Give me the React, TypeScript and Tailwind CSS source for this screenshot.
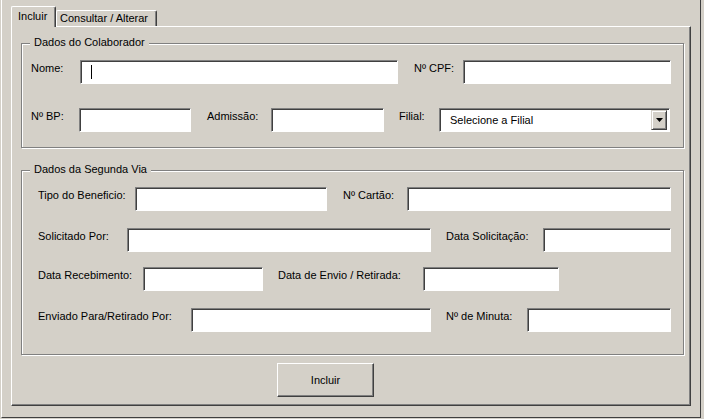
import React from 'react';

const sunken =
  'h-[24px] shrink-0 bg-white border border-t-[#808080] border-l-[#808080] border-b-white border-r-white shadow-[inset_1px_1px_0_#404040]';

function Label({ className, children }: { className: string; children: React.ReactNode }) {
  return <span className={`shrink-0 pt-[2px] leading-[13px] whitespace-nowrap ${className}`}>{children}</span>;
}

function Group({ title, className, children }: { title: string; className: string; children: React.ReactNode }) {
  return (
    <div className={`relative border border-[#808080] shadow-[inset_1px_1px_0_#fff,1px_1px_0_#fff] ${className}`}>
      <span className="absolute left-[8px] -top-[8px] bg-[#d4d0c8] px-[4px] leading-[13px]">{title}</span>
      {children}
    </div>
  );
}

export default function App() {
  return (
    <div className="w-[704px] h-[419px] bg-[#d4d0c8] pl-[1px] text-[11px] text-black font-['Liberation_Sans',Arial,sans-serif]">
      <div className="w-[700px] h-[418px] border-l border-white border-r border-r-[#404040] border-b border-b-[#404040] pt-[6px] pl-[9px]">
        {/* abas */}
        <div className="flex items-end h-[20px]">
          <div className="relative z-10 -mb-[1px] h-[21px] w-[45px] bg-[#d4d0c8] border-l border-t border-white border-r border-r-[#404040] rounded-tl-[2px] rounded-tr-[2px] shadow-[inset_-1px_0_0_#808080] pl-[6px] pt-[3px] leading-[13px]">
            Incluir
          </div>
          <div className="h-[16px] w-[101px] bg-[#d4d0c8] border-l border-t border-white border-r border-r-[#404040] rounded-tl-[2px] rounded-tr-[2px] shadow-[inset_-1px_0_0_#808080] pl-[3px] pt-[1px] leading-[13px]">
            Consultar / Alterar
          </div>
        </div>

        {/* painel da aba */}
        <div className="w-[680px] h-[380px] border-t border-l border-white border-r border-b border-r-[#404040] border-b-[#404040] shadow-[inset_-1px_-1px_0_#808080] pl-[9px] pt-[16px]">
          <Group title="Dados do Colaborador" className="w-[663px] h-[105px] pl-[9px] pt-[16px]">
            <div className="flex items-start">
              <Label className="w-[49px]">Nome:</Label>
              <div className={`${sunken} w-[318px] relative`}>
                <span className="absolute left-[10px] top-[4px] w-[1px] h-[14px] bg-black" />
              </div>
              <Label className="w-[49px] ml-[16px]">Nº CPF:</Label>
              <div className={`${sunken} w-[208px]`} />
            </div>
            <div className="flex items-start mt-[24px]">
              <Label className="w-[48px]">Nº BP:</Label>
              <div className={`${sunken} w-[112px]`} />
              <Label className="w-[64px] ml-[16px]">Admissão:</Label>
              <div className={`${sunken} w-[113px]`} />
              <Label className="w-[40px] ml-[15px]">Filial:</Label>
              <div className={`${sunken} w-[231px] flex items-center justify-between pl-[10px] pr-[2px]`}>
                <span className="leading-[13px]">Selecione a Filial</span>
                <span className="w-[16px] h-[20px] flex items-center justify-center bg-[#d4d0c8] border border-t-[#d4d0c8] border-l-[#d4d0c8] border-b-[#404040] border-r-[#404040] shadow-[inset_1px_1px_0_#fff,inset_-1px_-1px_0_#808080]">
                  <svg width="7" height="4" viewBox="0 0 7 4">
                    <path d="M0 0h7L3.5 4z" fill="#000" />
                  </svg>
                </span>
              </div>
            </div>
          </Group>

          <Group title="Dados da Segunda Via" className="w-[663px] h-[185px] mt-[22px] pl-[16px] pt-[16px]">
            <div className="flex items-start">
              <Label className="w-[97px]">Tipo do Beneficio:</Label>
              <div className={`${sunken} w-[192px]`} />
              <Label className="w-[64px] ml-[16px]">Nº Cartão:</Label>
              <div className={`${sunken} w-[264px]`} />
            </div>
            <div className="flex items-start mt-[17px]">
              <Label className="w-[89px]">Solicitado Por:</Label>
              <div className={`${sunken} w-[304px]`} />
              <Label className="w-[97px] ml-[15px]">Data Solicitação:</Label>
              <div className={`${sunken} w-[128px]`} />
            </div>
            <div className="flex items-start mt-[15px]">
              <Label className="w-[105px]">Data Recebimento:</Label>
              <div className={`${sunken} w-[120px]`} />
              <Label className="w-[145px] ml-[15px]">Data de Envio / Retirada:</Label>
              <div className={`${sunken} w-[136px]`} />
            </div>
            <div className="flex items-start mt-[17px]">
              <Label className="w-[153px]">Enviado Para/Retirado Por:</Label>
              <div className={`${sunken} w-[240px]`} />
              <Label className="w-[81px] ml-[15px]">Nº de Minuta:</Label>
              <div className={`${sunken} w-[144px]`} />
            </div>
          </Group>

          <button
            type="button"
            className="block ml-[256px] mt-[8px] w-[97px] h-[34px] bg-[#d4d0c8] border border-t-white border-l-white border-b-[#404040] border-r-[#404040] shadow-[inset_-1px_-1px_0_#808080] leading-[13px]"
          >
            Incluir
          </button>
        </div>
      </div>
    </div>
  );
}
